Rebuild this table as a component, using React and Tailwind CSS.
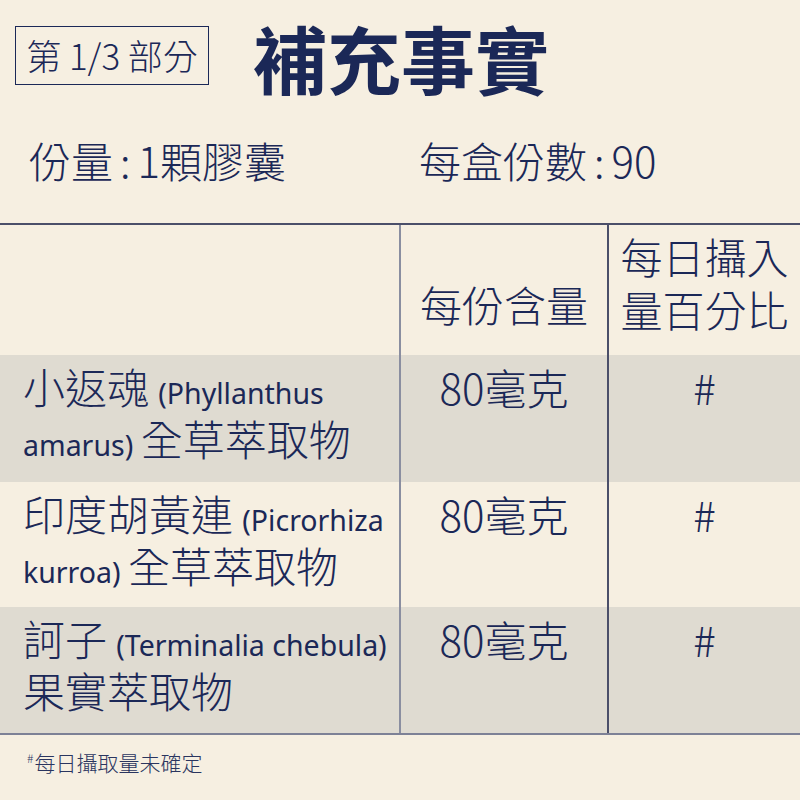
const rows = [
  {
    zh: "小返魂",
    latin: "(Phyllanthus",
    line2Latin: "amarus)",
    line2Zh: "全草萃取物",
    amount: "80毫克",
    shaded: true,
  },
  {
    zh: "印度胡黃連",
    latin: "(Picrorhiza",
    line2Latin: "kurroa)",
    line2Zh: "全草萃取物",
    amount: "80毫克",
    shaded: false,
  },
  {
    zh: "訶子",
    latin: "(Terminalia chebula)",
    line2Latin: "",
    line2Zh: "果實萃取物",
    amount: "80毫克",
    shaded: true,
  },
];

const heights = ["h-[127px]", "h-[125px]", "h-[126px]"];

export default function App() {
  return (
    <div className="w-[800px] h-[800px] overflow-hidden bg-[#f6efe1] text-[#1b2857] font-['Noto_Sans_CJK_TC','Noto_Sans_CJK_JP',sans-serif]">
      {/* Title */}
      <div className="flex items-start pt-[20px] pl-[15px]">
        <div className="mt-[6px] w-[194px] h-[59px] border border-[#1b2857] flex items-center justify-center text-[35px] font-light">
          第 1/3 部分
        </div>
        <h1 className="ml-[44px] text-[74px] leading-[74px] font-bold">補充事實</h1>
      </div>

      {/* Serving info */}
      <div className="flex mt-[45px] pl-[29px] text-[42px] leading-[42px] font-light">
        <div className="w-[390px]">
          份量<span className="mx-[7px]">:</span>1顆膠囊
        </div>
        <div>
          每盒份數<span className="mx-[7px]">:</span>90
        </div>
      </div>

      {/* Table */}
      <div className="mt-[42px] border-t-2 border-b-2 border-t-[#4b4f69] border-b-[#7d8196]">
        <div className="grid grid-cols-[399px_208px_193px] h-[130px] text-[42px] font-light">
          <div />
          <div className="border-l-2 border-[#8a8ea0] flex items-end justify-center pb-[25px] leading-[52px]">
            每份含量
          </div>
          <div className="border-l-2 border-[#4b4f69] flex items-end justify-center pb-[20px] leading-[53px] text-center">
            <div>
              每日攝入
              <br />
              量百分比
            </div>
          </div>
        </div>

        {rows.map((r, i) => (
          <div
            key={i}
            className={`grid grid-cols-[399px_208px_193px] ${heights[i]} ${r.shaded ? "bg-[#dfdbd1]" : "bg-[#f6efe1]"} font-light`}
          >
            <div className="pl-[23px] pt-[5px] text-[42px] leading-[52px]">
              <div>
                {r.zh}{" "}
                <span className="font-['Noto_Sans',sans-serif] font-normal text-[28.5px] leading-none">{r.latin}</span>
              </div>
              <div>
                {r.line2Latin && (
                  <span className="font-['Noto_Sans',sans-serif] font-normal text-[28.5px] leading-none">{r.line2Latin} </span>
                )}
                {r.line2Zh}
              </div>
            </div>
            <div className="border-l-2 border-[#8a8ea0] pt-[6px] text-center text-[42px] leading-[52px]">
              {r.amount}
            </div>
            <div className="border-l-2 border-[#4b4f69] pt-[6px] text-center text-[42px] leading-[52px]">
              #
            </div>
          </div>
        ))}
      </div>

      {/* Footnote */}
      <div className="mt-[17px] pl-[27px] text-[21px] leading-[21px] font-light flex items-start text-[#2a355f]">
        <span className="text-[12px] leading-[12px] mr-[1px]">#</span>
        <span>每日攝取量未確定</span>
      </div>
    </div>
  );
}
